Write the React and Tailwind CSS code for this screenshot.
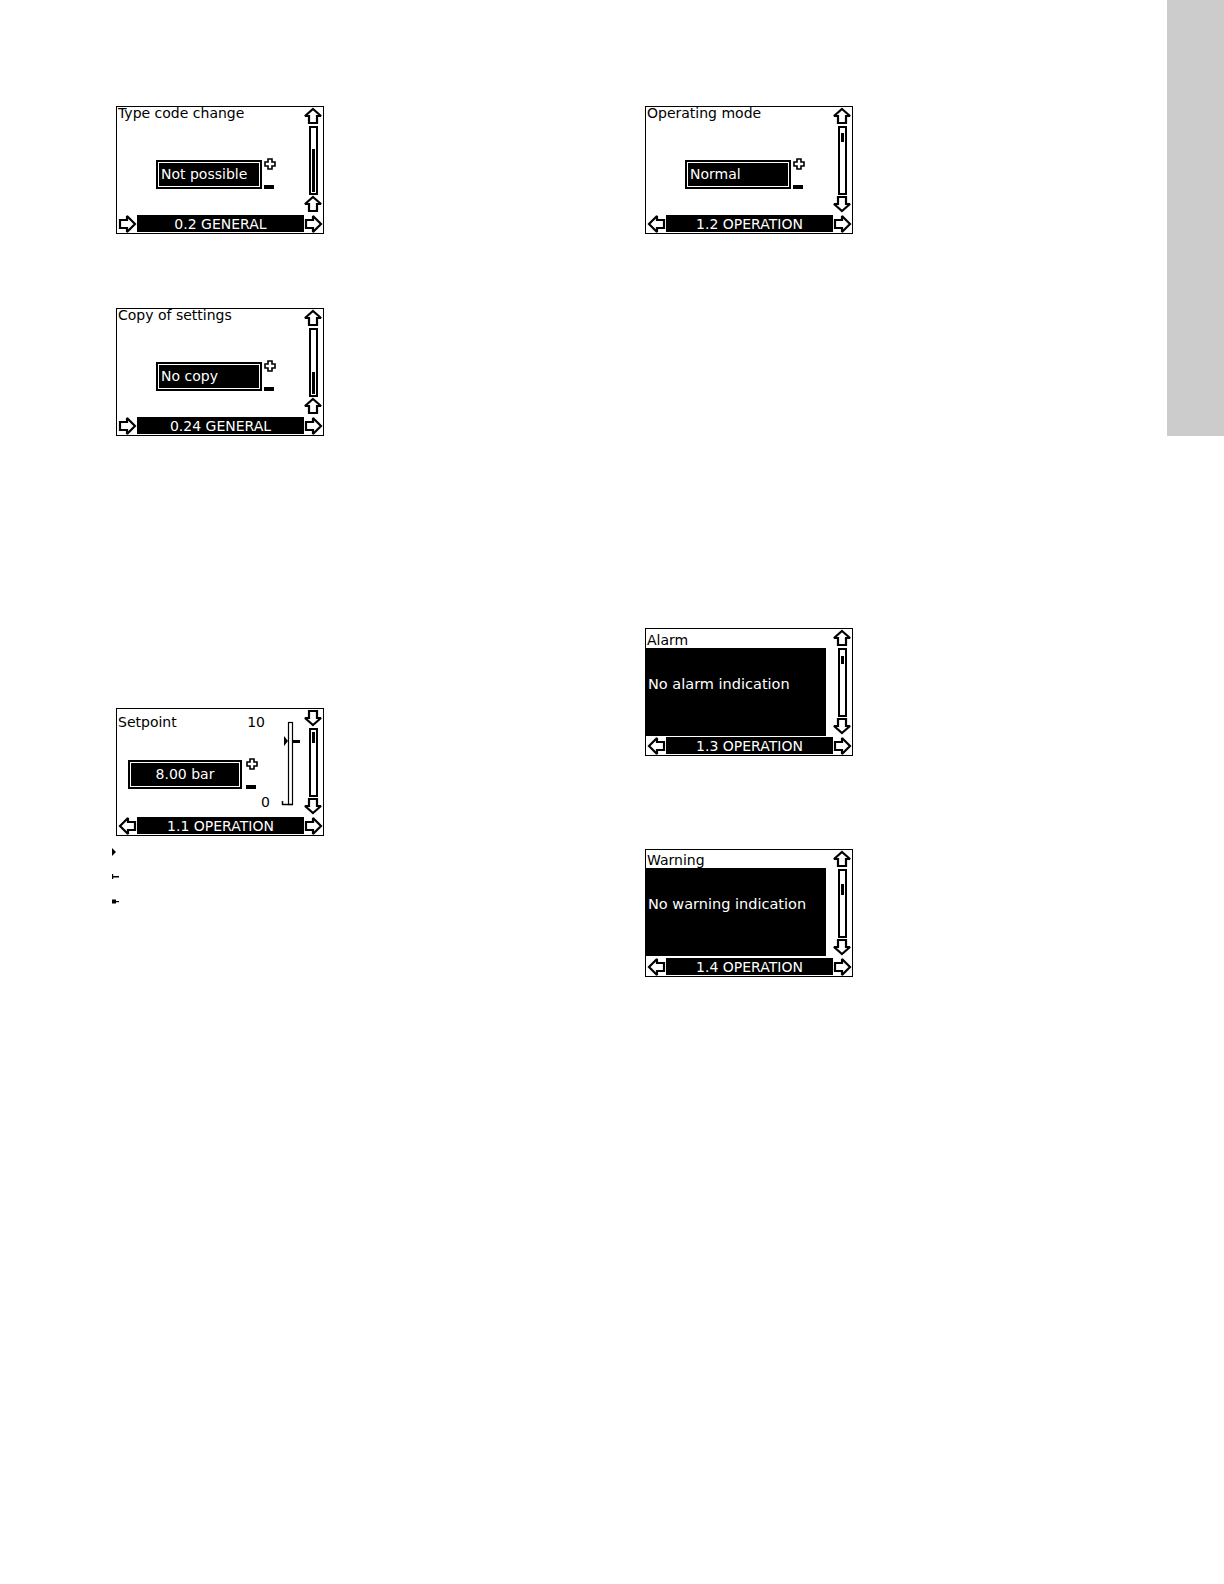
import React from "react"

const ARROWS = {
  up: { w: 18, h: 16, pts: "9,1 17,8 13,8 13,15 5,15 5,8 1,8" },
  down: { w: 18, h: 16, pts: "9,15 17,8 13,8 13,1 5,1 5,8 1,8" },
  right: { w: 17, h: 18, pts: "1,5 8,5 8,1 16,9 8,17 8,13 1,13" },
  left: { w: 17, h: 18, pts: "16,5 9,5 9,1 1,9 9,17 9,13 16,13" },
}

const Arrow = ({ dir }) => {
  const a = ARROWS[dir]
  return (
    <svg width={a.w} height={a.h} viewBox={`0 0 ${a.w} ${a.h}`} className="block overflow-visible">
      <polygon points={a.pts} fill="white" stroke="black" strokeWidth="2.2" strokeMiterlimit="2" />
    </svg>
  )
}

const Scroll = ({ fill }) => (
  <div className="mt-[2px] h-[69px] w-[9px] border-2 border-black bg-white p-px">
    <div className={`w-full bg-black ${fill}`} />
  </div>
)

const PlusMinus = ({ gap = "ml-[2px]" }) => (
  <div className={`-mt-[2px] flex h-[31px] flex-col justify-between ${gap}`}>
    <svg width="12" height="12" viewBox="0 0 12 12" className="block">
      <polygon points="4,1 8,1 8,4 11,4 11,8 8,8 8,11 4,11 4,8 1,8 1,4 4,4" fill="white" stroke="black" strokeWidth="1.6" />
    </svg>
    <div className="h-[4px] w-[10px] bg-black" />
  </div>
)

const ValueBox = ({ width, center, children }) => (
  <div className={`h-[29px] border-2 border-black bg-white p-px ${width}`}>
    <div className={`h-full bg-black text-[14px] leading-[23px] text-white ${center ? "text-center" : "pl-[2px]"}`}>
      {children}
    </div>
  </div>
)

const Screen = ({ top, bottom, leftIcon, fill, label, children }) => (
  <div className="flex h-[128px] w-[208px] flex-col border border-black bg-white">
    <div className="flex h-[107px]">
      <div className="w-[186px]">{children}</div>
      <div className="flex w-[20px] flex-col items-center">
        <div className="mt-px">
          <Arrow dir={top} />
        </div>
        <Scroll fill={fill} />
        <div className="mt-px">
          <Arrow dir={bottom} />
        </div>
      </div>
    </div>
    <div className="flex h-[19px] items-center">
      <div className="flex w-[20px] justify-center">
        <Arrow dir={leftIcon} />
      </div>
      <div className="h-[17px] w-[167px] bg-black pt-px text-center text-[14px] leading-[16px] text-white">{label}</div>
      <div className="flex w-[19px] justify-center">
        <Arrow dir="right" />
      </div>
    </div>
  </div>
)

const SelectBody = ({ title, value }) => (
  <div className="flex flex-col">
    <div className="h-[13px] pl-px text-[14px] leading-[13px] whitespace-nowrap">{title}</div>
    <div className="mt-[40px] flex pl-[39px]">
      <ValueBox width="w-[106px]">{value}</ValueBox>
      <PlusMinus />
    </div>
  </div>
)

const MessageBody = ({ title, text, titleGap = "mt-[5px]" }) => (
  <div className="flex flex-col">
    <div className={`h-[13px] pl-px text-[14px] leading-[13px] ${titleGap}`}>{title}</div>
    <div className="mt-px h-[88px] w-[180px] bg-black pl-[2px] pt-[30px] text-[14.5px] leading-[13px] whitespace-nowrap text-white">
      {text}
    </div>
  </div>
)

const SetpointBody = () => (
  <div className="flex">
    <div className="flex w-[160px] flex-col">
      <div className="mt-[7px] flex h-[13px] w-[148px] items-end justify-between leading-[13px]">
        <span className="pl-px text-[14px]">Setpoint</span>
        <span className="text-[14px]">10</span>
      </div>
      <div className="mt-[31px] flex pl-[11px]">
        <ValueBox width="w-[114px]" center>
          8.00 bar
        </ValueBox>
        <PlusMinus gap="ml-[4px]" />
      </div>
      <div className="mt-[6px] w-[153px] text-right text-[14px] leading-[14px]">0</div>
    </div>
    <svg width="26" height="100" viewBox="0 0 26 100" className="mt-[10px] block">
      <rect x="11.5" y="3.5" width="4" height="82" fill="white" stroke="black" strokeWidth="1.2" />
      <polygon points="7,17 11,22 7,27" fill="black" />
      <rect x="16" y="21" width="7" height="3" fill="black" />
      <line x1="5" y1="85.5" x2="16" y2="85.5" stroke="black" strokeWidth="1.5" />
      <line x1="5.5" y1="82" x2="5.5" y2="86" stroke="black" strokeWidth="1.5" />
    </svg>
  </div>
)

const Legend = () => (
  <div className="-ml-[4px] mt-[12px] flex flex-col gap-[18px]">
    <svg width="4" height="8" viewBox="0 0 4 8" className="block">
      <polygon points="0,0 4,4 0,8" fill="black" />
    </svg>
    <svg width="7" height="5" viewBox="0 0 7 5" className="block">
      <rect x="0" y="0" width="1.2" height="5" fill="black" />
      <rect x="0" y="2" width="7" height="1.5" fill="black" />
    </svg>
    <svg width="7" height="5" viewBox="0 0 7 5" className="mt-[2px] block">
      <rect x="0" y="0.5" width="4" height="4" fill="black" />
      <rect x="4" y="2" width="3" height="1.2" fill="black" />
    </svg>
  </div>
)

export default function App() {
  return (
    <div className="flex h-[1584px] w-[1224px] bg-white font-['DejaVu_Sans',sans-serif] text-black">
      <div className="ml-[116px] flex w-[529px] flex-col pt-[106px]">
        <Screen top="up" bottom="up" leftIcon="right" fill="mt-[20px] h-[43px]" label="0.2 GENERAL">
          <SelectBody title="Type code change" value="Not possible" />
        </Screen>
        <div className="mt-[74px]">
          <Screen top="up" bottom="up" leftIcon="right" fill="mt-[41px] h-[22px]" label="0.24 GENERAL">
            <SelectBody title="Copy of settings" value="No copy" />
          </Screen>
        </div>
        <div className="mt-[272px]">
          <Screen top="down" bottom="down" leftIcon="left" fill="mt-[1px] h-[11px]" label="1.1 OPERATION">
            <SetpointBody />
          </Screen>
        </div>
        <Legend />
      </div>

      <div className="flex w-[522px] flex-col pt-[106px]">
        <Screen top="up" bottom="down" leftIcon="left" fill="mt-[4px] h-[9px]" label="1.2 OPERATION">
          <SelectBody title="Operating mode" value="Normal" />
        </Screen>
        <div className="mt-[394px]">
          <Screen top="up" bottom="down" leftIcon="left" fill="mt-[5px] h-[8px]" label="1.3 OPERATION">
            <MessageBody title="Alarm" text="No alarm indication" />
          </Screen>
        </div>
        <div className="mt-[93px]">
          <Screen top="up" bottom="down" leftIcon="left" fill="mt-[12px] h-[11px]" label="1.4 OPERATION">
            <MessageBody title="Warning" text="No warning indication" titleGap="mt-[4px]" />
          </Screen>
        </div>
      </div>

      <div className="h-[436px] w-[57px] bg-[#cccccc]" />
    </div>
  )
}
